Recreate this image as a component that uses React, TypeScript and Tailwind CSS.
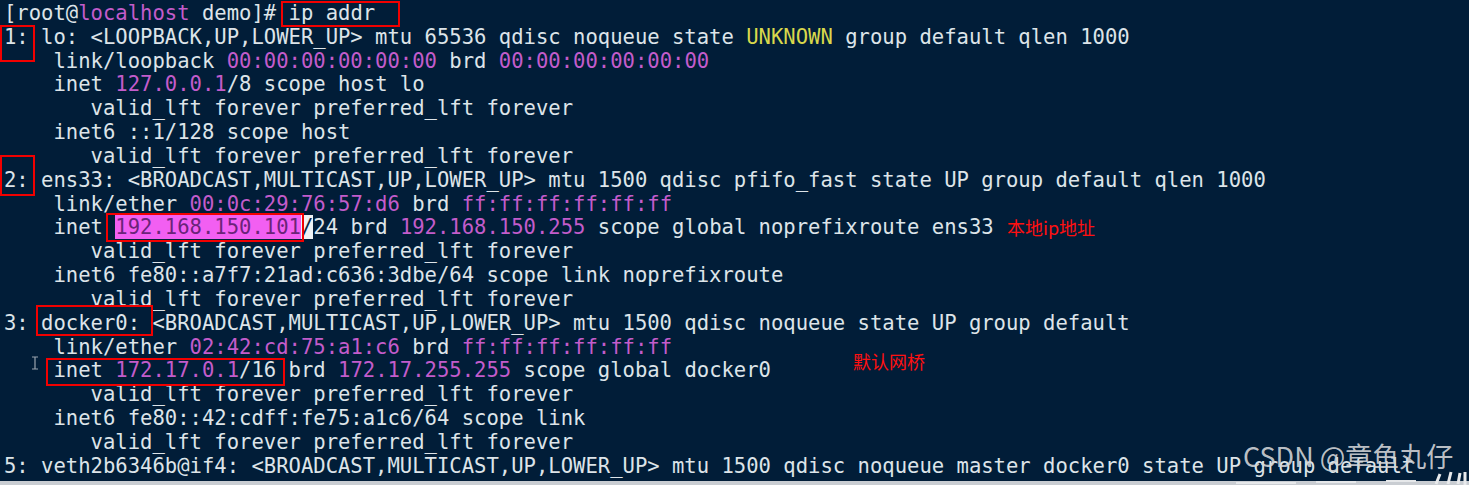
type Seg = [string, string?];

const MAG = "text-[#c35ccb]";
const YEL = "text-[#d9d84c]";
const SEL = "bg-[#f25ff2] text-[#6b2379]";
const CUR = "bg-[#eef2f5] text-[#0b2440]";

const lines: Seg[][] = [
  [["[root@"], ["localhost", MAG], [" demo]# ip addr"]],
  [["1: lo: <LOOPBACK,UP,LOWER_UP> mtu 65536 qdisc noqueue state "], ["UNKNOWN", YEL], [" group default qlen 1000"]],
  [["    link/loopback "], ["00:00:00:00:00:00", MAG], [" brd "], ["00:00:00:00:00:00", MAG]],
  [["    inet "], ["127.0.0.1", MAG], ["/8 scope host lo"]],
  [["       valid_lft forever preferred_lft forever"]],
  [["    inet6 ::1/128 scope host"]],
  [["       valid_lft forever preferred_lft forever"]],
  [["2: ens33: <BROADCAST,MULTICAST,UP,LOWER_UP> mtu 1500 qdisc pfifo_fast state UP group default qlen 1000"]],
  [["    link/ether "], ["00:0c:29:76:57:d6", MAG], [" brd "], ["ff:ff:ff:ff:ff:ff", MAG]],
  [["    inet "], ["192.168.150.101", SEL], ["/", CUR], ["24 brd "], ["192.168.150.255", MAG], [" scope global noprefixroute ens33"]],
  [["       valid_lft forever preferred_lft forever"]],
  [["    inet6 fe80::a7f7:21ad:c636:3dbe/64 scope link noprefixroute"]],
  [["       valid_lft forever preferred_lft forever"]],
  [["3: docker0: <BROADCAST,MULTICAST,UP,LOWER_UP> mtu 1500 qdisc noqueue state UP group default"]],
  [["    link/ether "], ["02:42:cd:75:a1:c6", MAG], [" brd "], ["ff:ff:ff:ff:ff:ff", MAG]],
  [["    inet "], ["172.17.0.1", MAG], ["/16 brd "], ["172.17.255.255", MAG], [" scope global docker0"]],
  [["       valid_lft forever preferred_lft forever"]],
  [["    inet6 fe80::42:cdff:fe75:a1c6/64 scope link"]],
  [["       valid_lft forever preferred_lft forever"]],
  [["5: veth2b6346b@if4: <BROADCAST,MULTICAST,UP,LOWER_UP> mtu 1500 qdisc noqueue master docker0 state UP group default"]],
];

export default function App() {
  return (
    <div className="relative flex h-[485px] w-[1469px] flex-col overflow-hidden bg-[#011d38]">
      {/* terminal output */}
      <div className="flex-1 pl-[4px] pt-[2px] font-['DejaVu_Sans_Mono',monospace] text-[20.56px] leading-[23.84px] text-[#dde4e9]">
        {lines.map((segs, i) => (
          <div key={i} className="h-[23.84px] whitespace-pre">
            {segs.map(([t, c], j) => (
              <span key={j} className={c}>
                {t}
              </span>
            ))}
          </div>
        ))}
      </div>
      <div className="h-[4px] bg-[#c9cdd2]" />

      {/* red markup boxes */}
      <div className="absolute left-[281px] top-[1px] h-[26px] w-[119px] border-2 border-[#f20000]" />
      <div className="absolute left-0 top-[25px] h-[37px] w-[35px] border-2 border-[#f20000]" />
      <div className="absolute left-0 top-[155px] h-[41px] w-[35px] border-2 border-[#f20000]" />
      <div className="absolute left-[106px] top-[213px] h-[29px] w-[198px] border-2 border-[#f20000]" />
      <div className="absolute left-[36px] top-[305px] h-[31px] w-[117px] border-2 border-[#f20000]" />
      <div className="absolute left-[46px] top-[358px] h-[28px] w-[239px] border-2 border-[#f20000]" />

      {/* notes */}
      <span className="absolute left-[1007px] top-[216px] font-['Noto_Sans_CJK_SC',sans-serif] text-[18px] leading-[22px] text-[#ff1010]">
        本地ip地址
      </span>
      <span className="absolute left-[853px] top-[350px] font-['Noto_Sans_CJK_SC',sans-serif] text-[18px] leading-[22px] text-[#ff1010]">
        默认网桥
      </span>

      {/* mouse i-beam */}
      <svg className="absolute left-[31px] top-[356px]" width="8" height="14" viewBox="0 0 8 14">
        <path d="M1 1h6M4 1v12M1 13h6" stroke="#9aa4ae" strokeWidth="1.2" fill="none" />
      </svg>

      {/* watermark */}
      <span className="absolute left-[1243px] top-[442px] font-['Noto_Sans_CJK_SC',sans-serif] text-[27px] leading-[27px] text-[#d4d6d8]/90">
        CSDN @章鱼丸仔
      </span>
      <svg className="absolute left-[1236px] top-[470px]" width="233" height="15" viewBox="0 0 233 15">
        <path d="M0 13h60M80 12h40M150 11h30" stroke="#e6e8ea" strokeWidth="2" fill="none" />
        <path d="M200 14l4-10M212 14l3-12M222 14l2-11M229 15V2" stroke="#e8eaec" strokeWidth="3" fill="none" />
      </svg>
    </div>
  );
}
